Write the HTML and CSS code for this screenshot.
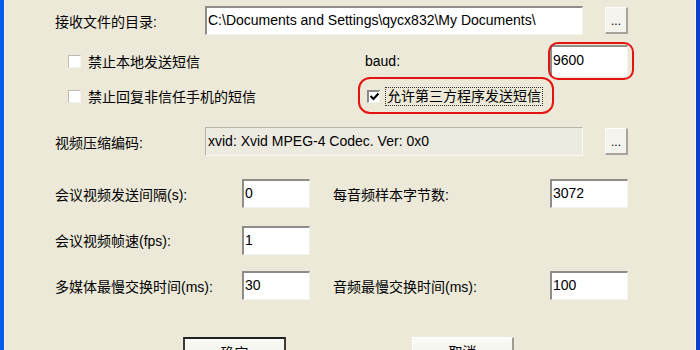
FILE: index.html
```html
<!DOCTYPE html>
<html>
<head>
<meta charset="utf-8">
<link rel="stylesheet" href="styles.css">
</head>
<body>
<div class="window">
  <div class="content">
    <div class="row r1">
      <span class="label w150">接收文件的目录:</span>
      <div class="edit w378">C:\Documents and Settings\qycx832\My Documents\</div>
      <div class="dots">...</div>
    </div>
    <div class="row r2">
      <label class="chk-group g1"><span class="chk"></span><span>禁止本地发送短信</span></label>
      <span class="label w185">baud:</span>
      <div class="edit w78 tall">9600</div>
    </div>
    <div class="row r3">
      <label class="chk-group g1"><span class="chk"></span><span>禁止回复非信任手机的短信</span></label>
      <label class="chk-group g2"><span class="chk checked"><svg width="9" height="9" viewBox="0 0 9 9"><path d="M0.5 4 L3.5 7 L8.5 1.5" fill="none" stroke="#000" stroke-width="2.2"/></svg></span><span class="focus">允许第三方程序发送短信</span></label>
    </div>
    <div class="row r4">
      <span class="label w150">视频压缩编码:</span>
      <div class="edit disabled w378">xvid: Xvid MPEG-4 Codec. Ver: 0x0</div>
      <div class="dots">...</div>
    </div>
    <div class="row r5">
      <span class="label w187">会议视频发送间隔(s):</span>
      <div class="edit w68">0</div>
      <span class="label w217 ml23">每音频样本字节数:</span>
      <div class="edit w78">3072</div>
    </div>
    <div class="row r6">
      <span class="label w187">会议视频帧速(fps):</span>
      <div class="edit w68">1</div>
    </div>
    <div class="row r7">
      <span class="label w187">多媒体最慢交换时间(ms):</span>
      <div class="edit w68">30</div>
      <span class="label w217 ml23">音频最慢交换时间(ms):</span>
      <div class="edit w78">100</div>
    </div>
    <div class="row r8">
      <div class="btn default">确定</div>
      <div class="btn cancel">取消</div>
    </div>
  </div>
  <div class="mark mark1"></div>
  <div class="mark mark2"></div>
</div>
</body>
</html>
```

FILE: styles.css
```css
html, body {
  margin: 0;
  padding: 0;
}
body {
  width: 700px;
  height: 350px;
  overflow: hidden;
  background: #ECE9D8;
  font-family: "Liberation Sans", "Noto Sans CJK SC", sans-serif;
  font-size: 14px;
  color: #000;
}
.window {
  position: relative;
  box-sizing: border-box;
  width: 700px;
  height: 350px;
  border-left: 4px solid #0a5ae8;
  border-right: 4px solid #0a3fcf;
  box-shadow: inset 1px 0 0 #f6f4ea, inset -1px 0 0 #f6f4ea;
  padding-top: 6px;
}
.content {
  padding-left: 51px;
}
.row {
  display: flex;
  align-items: center;
}
.r1 { height: 29px; }
.r2 { height: 32px; margin-top: 10px; }
.r3 { height: 24px; margin-top: 7px; }
.r4 { height: 29px; margin-top: 19px; }
.r5 { height: 29px; margin-top: 23px; }
.r6 { height: 28px; margin-top: 18px; }
.r7 { height: 29px; margin-top: 17px; }
.r8 { height: 30px; margin-top: 37px; align-items: flex-start; }

.label {
  flex: none;
  white-space: nowrap;
}
.w150 { width: 150px; }
.w185 { width: 185px; }
.w187 { width: 187px; }
.w217 { width: 217px; }
.ml23 { margin-left: 23px; }

.edit {
  flex: none;
  box-sizing: border-box;
  height: 29px;
  background: #fff;
  border-top: 2px solid #8e8d88;
  border-left: 2px solid #8e8d88;
  border-right: 1px solid #f4f3ee;
  border-bottom: 1px solid #f4f3ee;
  padding-left: 1px;
  line-height: 24px;
  white-space: nowrap;
  overflow: hidden;
}
.edit.tall { height: 32px; line-height: 26px; }
.edit.disabled {
  background: #EDEAE0;
  border-top: 1px solid #b5b3aa;
  border-left: 1px solid #b5b3aa;
  border-right: 1px solid #fbfaf6;
  border-bottom: 1px solid #fbfaf6;
  padding-left: 2px;
  line-height: 26px;
}
.w378 { width: 378px; }
.w78 { width: 78px; }
.w68 { width: 68px; }

.dots {
  flex: none;
  box-sizing: border-box;
  width: 23px;
  height: 27px;
  margin-left: 22px;
  background: #f4f3ee;
  border-top: 1px solid #fff;
  border-left: 1px solid #fff;
  border-right: 2px solid #a6a49b;
  border-bottom: 2px solid #a6a49b;
  font-size: 12px;
  text-align: center;
  line-height: 26px;
  letter-spacing: 0;
}

.chk-group {
  display: flex;
  align-items: center;
  flex: none;
}
.g1 { width: 297px; margin-left: 13px; }
.g2 { margin-left: 2px; }
.chk {
  box-sizing: border-box;
  width: 13px;
  height: 13px;
  background: #fff;
  border-top: 1px solid #bdbbb3;
  border-left: 1px solid #bdbbb3;
  border-right: 1px solid #f4f3ee;
  border-bottom: 1px solid #f4f3ee;
  margin-right: 7px;
  flex: none;
  display: flex;
  align-items: center;
  justify-content: center;
}
.chk.checked {
  border-top: 2px solid #8a8984;
  border-left: 2px solid #8a8984;
  margin-right: 5px;
}
.focus {
  border: 1px dotted #333;
  padding: 0 1px;
  line-height: 17px;
}

.btn {
  flex: none;
  box-sizing: border-box;
  height: 30px;
  background: linear-gradient(#fbfbf7, #ecebe4);
  text-align: center;
  line-height: 28px;
}
.btn.default {
  width: 103px;
  margin-left: 128px;
  border: 2px solid #3a3a3a;
  border-top-color: #222;
}
.btn.cancel {
  width: 102px;
  margin-left: 126px;
  border-top: 1px solid #fff;
  border-left: 1px solid #fff;
  border-right: 2px solid #9e9c94;
}

.mark {
  position: absolute;
  border: 2px solid #e51212;
  border-radius: 10px;
  box-sizing: border-box;
}
.mark1 {
  left: 544px;
  top: 42px;
  width: 86px;
  height: 38px;
}
.mark2 {
  left: 354px;
  top: 77px;
  width: 196px;
  height: 37px;
  border-radius: 12px;
}
```
